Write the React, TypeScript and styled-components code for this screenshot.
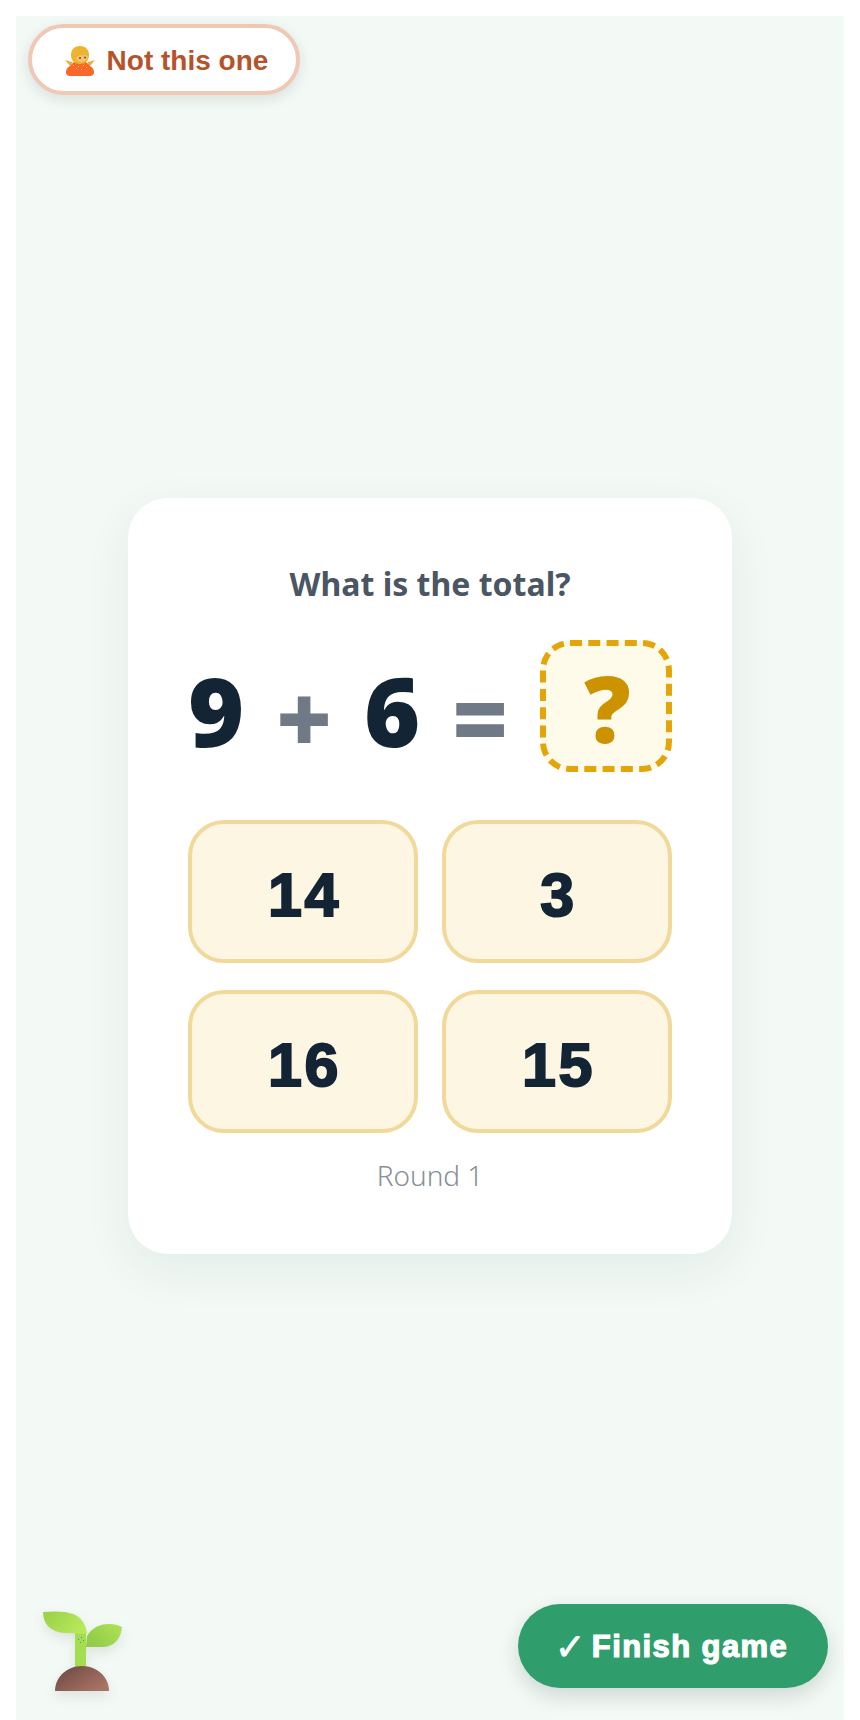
import React from "react";
import styled, { createGlobalStyle } from "styled-components";

const Global = createGlobalStyle`
  html, body { margin: 0; padding: 0; background: #fff; overflow: hidden; }
  body { margin: 16px; }
  * { box-sizing: border-box; }
`;

const Stage = styled.main`
  position: relative;
  height: 1720px;
  background: #f3f9f5;
  display: flex;
  align-items: center;
  justify-content: center;
`;

const SkipButton = styled.button`
  position: absolute;
  top: 8px;
  left: 12px;
  width: 272px;
  height: 71px;
  display: flex;
  align-items: center;
  justify-content: center;
  gap: 12px;
  background: #fff;
  border: 4px solid #f0c8b4;
  border-radius: 36px;
  box-shadow: 0 4px 14px rgba(20, 40, 60, 0.12);
  color: #b5532a;
  font: 700 28px "Liberation Sans", Arial, sans-serif;
  padding: 2px 0 0 5px;
`;

const Card = styled.section`
  width: 604px;
  height: 756px;
  background: #fff;
  border-radius: 40px;
  padding: 60px;
  box-shadow: 0 16px 48px rgba(20, 80, 70, 0.07);
  display: flex;
  flex-direction: column;
  align-items: stretch;
`;

const Prompt = styled.h2`
  margin: 8px 0 0;
  text-align: center;
  color: #4a5663;
  font: 700 32px/36px "Noto Sans", "Open Sans", sans-serif;
  height: 41px;
`;

const Equation = styled.div`
  display: flex;
  align-items: center;
  justify-content: space-between;
  height: 132px;
  margin-top: 34px;
`;

const Term = styled.span<{ $muted?: boolean }>`
  color: ${(p) => (p.$muted ? "#6f7a86" : "#132435")};
  font: 900 96px/1 "Noto Sans", sans-serif;
  padding-top: ${(p) => (p.$muted ? "22px" : "8px")};
`;

const Blank = styled.div`
  width: 132px;
  height: 132px;
  border: 6px dashed #e3a507;
  border-radius: 30px;
  background: #fffbea;
  color: #cc9200;
  font: 900 92px/1 "Noto Sans", sans-serif;
  display: flex;
  align-items: center;
  justify-content: center;
  padding: 4px 0 0 3px;
`;

const Options = styled.div`
  display: grid;
  grid-template-columns: 1fr 1fr;
  gap: 27px 24px;
  margin-top: 48px;
`;

const Option = styled.button`
  height: 143px;
  background: #fdf6e3;
  border: 4px solid #f0d99a;
  border-radius: 36px;
  color: #132435;
  font: 700 61px "Liberation Sans", Arial, sans-serif;
  letter-spacing: 2.5px;
  -webkit-text-stroke: 2px #132435;
  padding: 6px 0 0 3px;
  display: flex;
  align-items: center;
  justify-content: center;
`;

const RoundLabel = styled.p`
  margin: 23px 0 0;
  text-align: center;
  color: #8a9096;
  font: 300 28px/38px "Noto Sans", "Open Sans", sans-serif;
`;

const FinishButton = styled.button`
  position: absolute;
  left: 502px;
  top: 1588px;
  width: 310px;
  height: 84px;
  border: 0;
  border-radius: 42px;
  background: #2f9e6c;
  color: #fff;
  font: 700 31px "Liberation Sans", Arial, sans-serif;
  letter-spacing: 1.4px;
  -webkit-text-stroke: 1.2px #fff;
  box-shadow: 0 8px 20px rgba(20, 50, 50, 0.16);
  display: flex;
  align-items: center;
  justify-content: center;
  gap: 6px;
  padding: 2px 3px 0 0;
`;

const Tick = styled.span`
  font: 400 37px "DejaVu Sans", sans-serif;
  letter-spacing: 0;
  -webkit-text-stroke: 0.7px #fff;
`;

const SproutMark = styled.svg`
  position: absolute;
  left: 24px;
  top: 1590px;
  width: 100px;
  height: 100px;
  filter: drop-shadow(0 5px 6px rgba(20, 50, 50, 0.1));
`;

function Genie() {
  return (
    <svg width="30" height="30" viewBox="0 0 30 30" aria-hidden="true">
      <path d="M0 14 L7 16 L9 20 L4 19Z M30 14 L23 16 L21 20 L26 19Z" fill="#e9b23a" />
      <path d="M1 26 C1 21 6 20 9 16 L21 16 C24 20 29 21 29 26 C29 30 26 30 23 30 L7 30 C4 30 1 30 1 26Z" fill="#f9682a" />
      <path d="M6 9 C6 3 10 0 15 0 C21 0 24 4 24 9 C24 14 21 18 15 18 C9 18 6 14 6 9Z" fill="#edb52f" />
      <path d="M11 12 C13 9 19 8 23 10 C22 17 13 18 11 12Z" fill="#f3c36e" />
      <circle cx="15" cy="12" r="1" fill="#7a4a3a" />
      <circle cx="20" cy="11.5" r="1" fill="#7a4a3a" />
      <path d="M8 19 h1 v1 h-1z M13 20 h1 v1 h-1z M18 19 h1 v1 h-1z M21 21 h1 v1 h-1z M11 22 h1 v1 h-1z M16 23 h1 v1 h-1z" fill="#f4c432" />
    </svg>
  );
}

function Sprout() {
  return (
    <SproutMark viewBox="0 0 100 100" aria-hidden="true">
      <defs>
        <linearGradient id="leafA" x1="0" y1="0" x2="1" y2="0.4">
          <stop offset="0" stopColor="#98d048" />
          <stop offset="1" stopColor="#b6e85a" />
        </linearGradient>
        <linearGradient id="leafB" x1="1" y1="0" x2="0" y2="0.6">
          <stop offset="0" stopColor="#b0e256" />
          <stop offset="1" stopColor="#92cc48" />
        </linearGradient>
        <linearGradient id="soil" x1="0" y1="0" x2="1" y2="0.7">
          <stop offset="0" stopColor="#6a4742" />
          <stop offset="1" stopColor="#a87464" />
        </linearGradient>
      </defs>
      <path d="M35 26 L46 26 L46 62 L35 62Z" fill="#a4de50" />
      <path d="M3 6 C14 5 26 5 33 8 C41 11 46 18 47 28 L24 27 C11 26 3 18 3 6Z" fill="url(#leafA)" />
      <path d="M82 21 C74 17 56 15 47 30 L46 41 L62 41 C74 41 81 33 82 21Z" fill="url(#leafB)" />
      <path d="M15 85 C15 71 27 60 42 60 C57 60 69 71 69 85Z" fill="url(#soil)" />
      <path d="M38 33 h1 v1 h-1z M41 31 h1 v1 h-1z M40 36 h1 v1 h-1z M43 34 h1 v1 h-1z" fill="#2f9e8c" />
    </SproutMark>
  );
}

export default function App() {
  return (
    <>
      <Global />
      <Stage>
        <SkipButton>
          <Genie />
          Not this one
        </SkipButton>
        <Card>
          <Prompt>What is the total?</Prompt>
          <Equation>
            <Term>9</Term>
            <Term $muted>+</Term>
            <Term>6</Term>
            <Term $muted>=</Term>
            <Blank>?</Blank>
          </Equation>
          <Options>
            {[14, 3, 16, 15].map((n) => (
              <Option key={n}>{n}</Option>
            ))}
          </Options>
          <RoundLabel>Round 1</RoundLabel>
        </Card>
        <Sprout />
        <FinishButton>
          <Tick>✓</Tick>
          Finish game
        </FinishButton>
      </Stage>
    </>
  );
}
